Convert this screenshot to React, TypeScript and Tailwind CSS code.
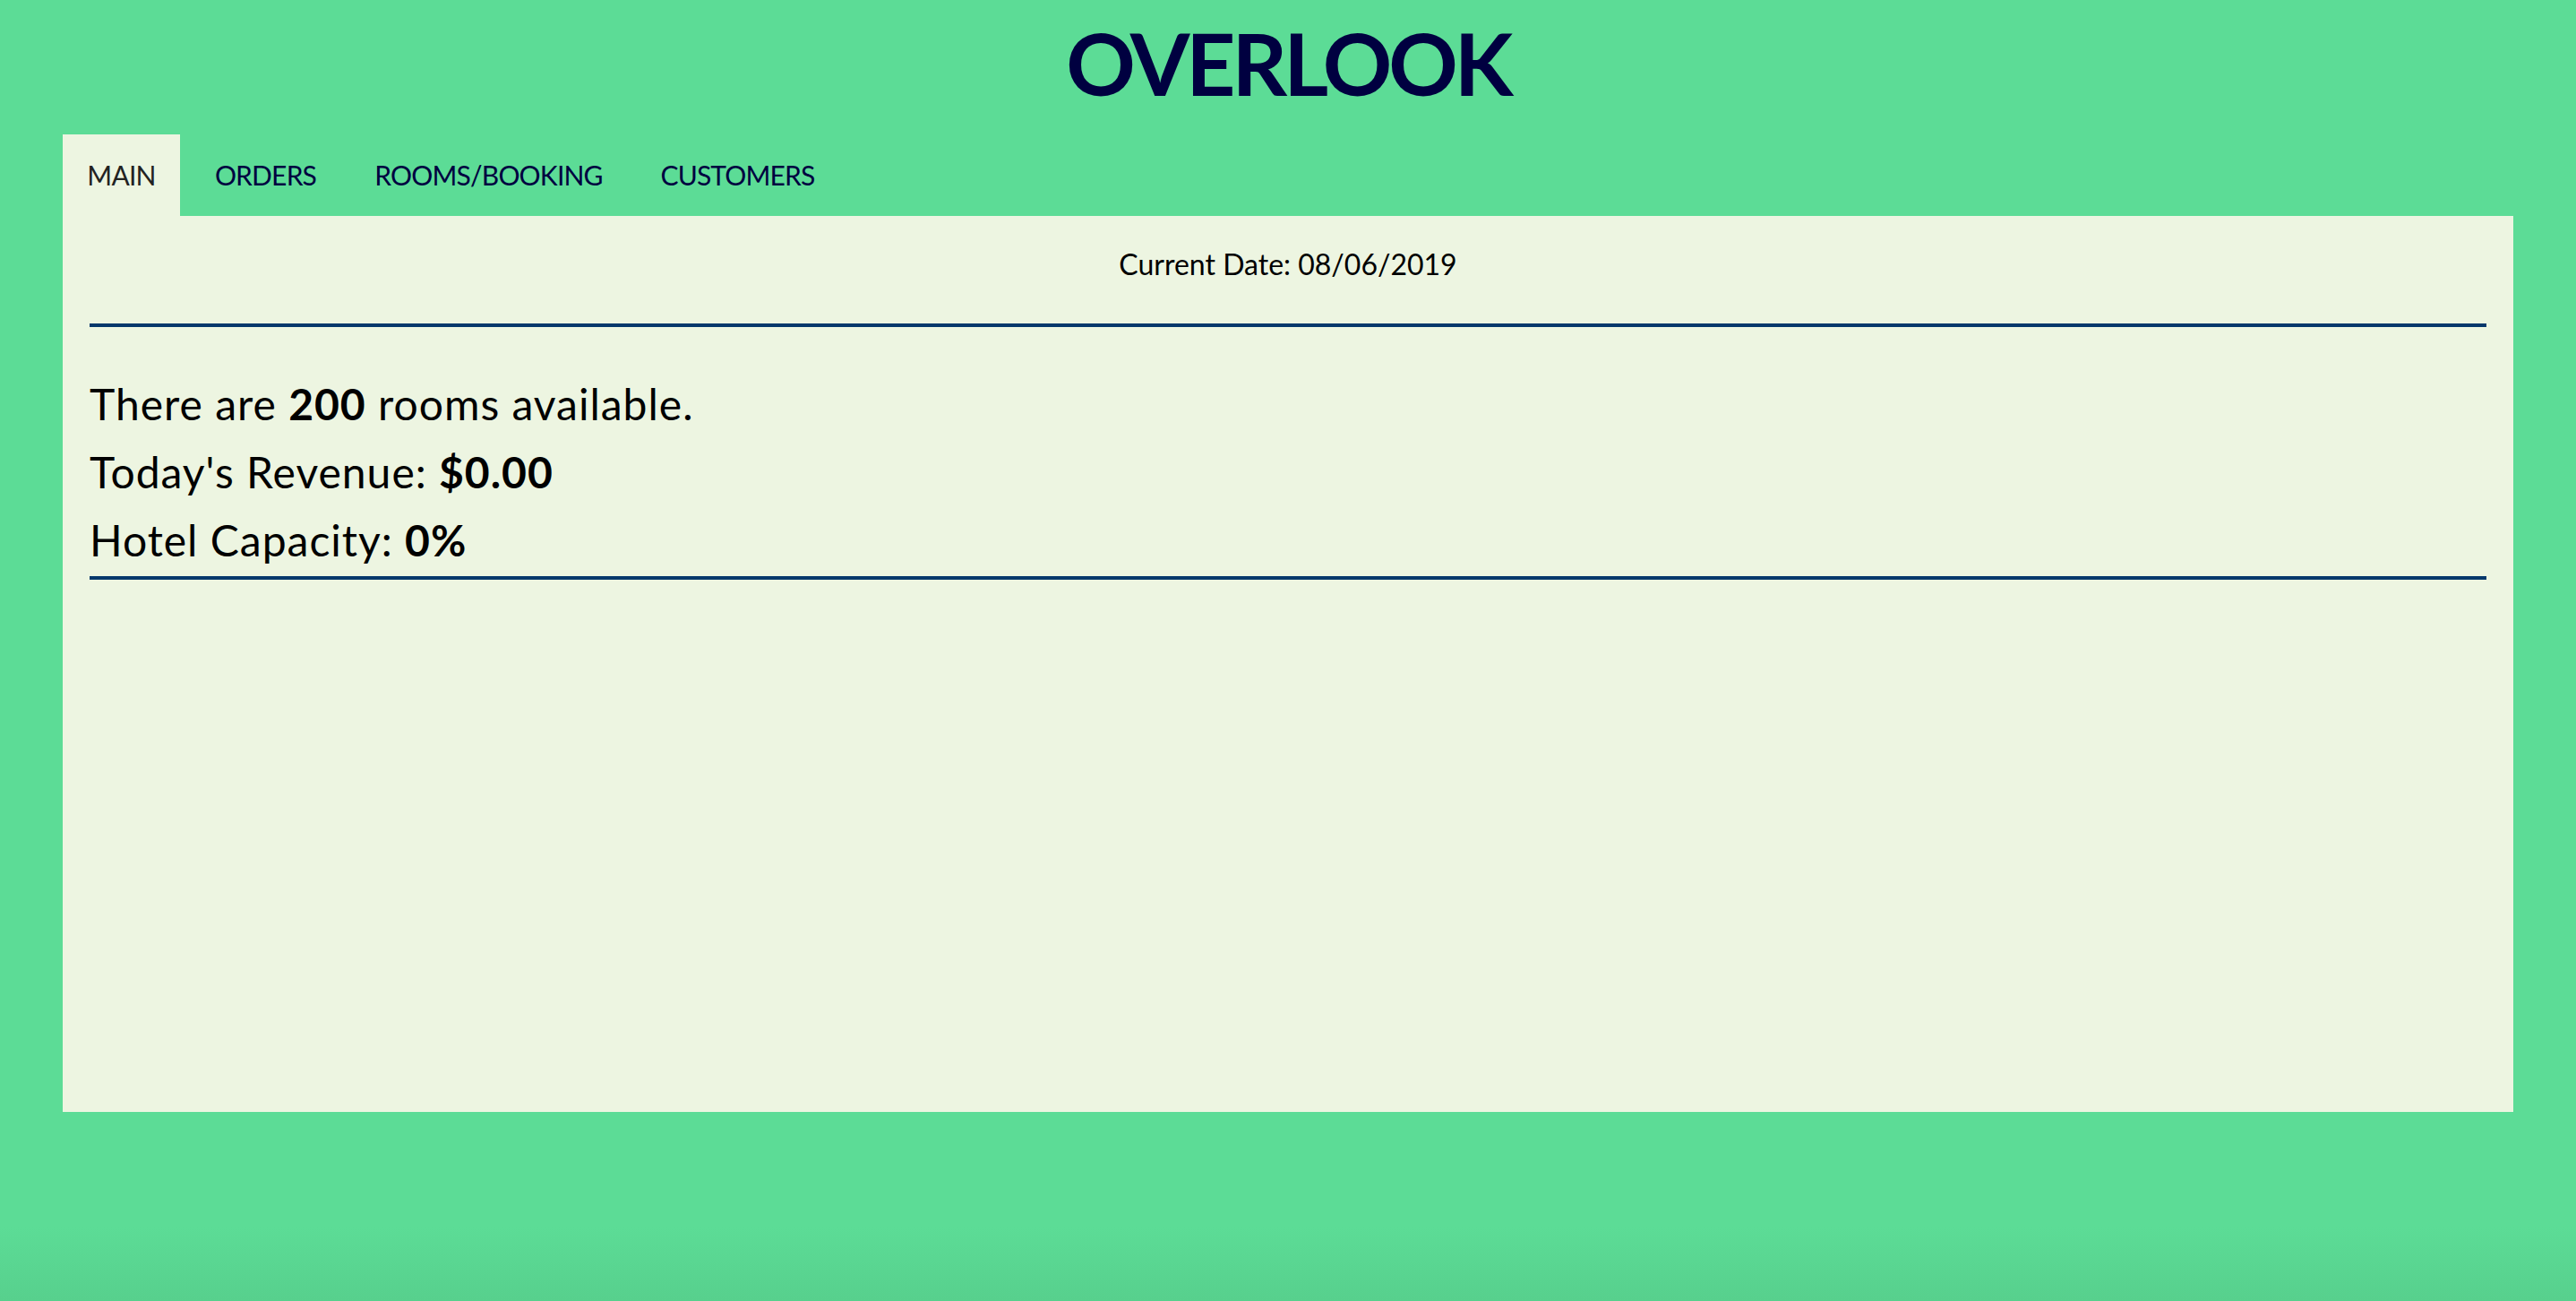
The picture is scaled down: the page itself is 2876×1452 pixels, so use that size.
import React from "react";

const tabs = [
  { label: "MAIN", w: "w-[131px]", active: true },
  { label: "ORDERS", w: "w-[171px]", active: false },
  { label: "ROOMS/BOOKING", w: "w-[307px]", active: false },
  { label: "CUSTOMERS", w: "w-[229px]", active: false },
];

export default function App() {
  return (
    <div
      className="min-h-[1452px] bg-[linear-gradient(to_bottom,#5cdc96_0px,#5cdc96_1370px,#57d08d_1452px)] px-[70px]"
      style={{ fontFamily: "Lato, 'Open Sans', sans-serif" }}
    >
      <header className="h-[150px] pt-[22px] text-center">
        <h1 className="text-[96px] leading-[96px] font-bold text-[#000040] tracking-[-4px]">
          OVERLOOK
        </h1>
      </header>
      <nav className="flex h-[91px] gap-[10px]">
        {tabs.map((t) => (
          <button
            key={t.label}
            className={
              t.active
                ? `${t.w} h-full flex items-center justify-center text-[30px] tracking-[-0.8px] text-[#222222] bg-[#edf5e1]`
                : `${t.w} h-full flex items-center justify-center text-[30px] tracking-[-0.8px] text-[#000040]`
            }
          >
            {t.label}
          </button>
        ))}
      </nav>
      <main className="h-[1000px] bg-[#edf5e1] px-[30px] text-black">
        <div className="h-[120px] pt-[35px]">
          <p className="text-center text-[32px] leading-[38px]">Current Date: 08/06/2019</p>
        </div>
        <div className="h-[4px] bg-[#05386b]" />
        <div className="pt-[48px] text-[48px] leading-[76px] tracking-[1px]">
          <p>
            There are <b>200</b> rooms available.
          </p>
          <p>
            Today's Revenue: <b>$0.00</b>
          </p>
          <p>
            Hotel Capacity: <b>0%</b>
          </p>
        </div>
        <div className="mt-[2px] h-[4px] bg-[#05386b]" />
      </main>
    </div>
  );
}
